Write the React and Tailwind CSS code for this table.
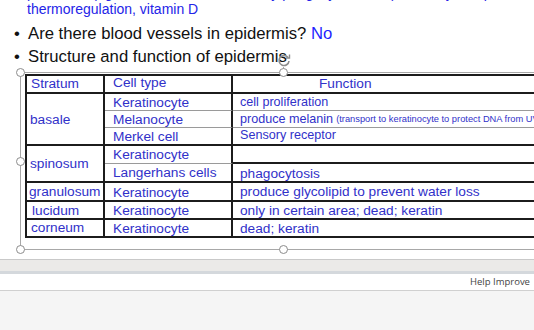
import React from 'react';

const dark = 'border-[#1c1c1c]';

const Cell = ({ className = '', children }) => (
  <div className={`flex overflow-visible whitespace-nowrap border-r-2 border-b-2 ${dark} ${className}`}>
    {children}
  </div>
);

const Handle = ({ className }) => (
  <div className={`absolute w-[9px] h-[9px] rounded-full bg-white border border-[#8c8c8c] ${className}`} />
);

const App = () => {
  return (
    <div className="w-[534px] h-[330px] overflow-hidden bg-[#f5f5f5] font-['Liberation_Sans',Arial,sans-serif]">
      {/* slide */}
      <div className="h-[259px] bg-white overflow-hidden">
        <div className="-mt-[14px] pl-[27px] text-[14px] text-[#2424e8] whitespace-nowrap">
          <div className="leading-[15px]">protection (against abrasion, infection by phagocytosis, UV), sensory reception,</div>
          <div className="leading-[16px]">thermoregulation, vitamin D</div>
        </div>

        <div className="mt-[5px] text-[16.7px] leading-[23px] text-[#111] whitespace-nowrap">
          <div className="flex">
            <span className="w-[28px] pl-[14px]">•</span>
            <span>
              Are there blood vessels in epidermis? <span className="text-[#1f1fff]">No</span>
            </span>
          </div>
          <div className="flex">
            <span className="w-[28px] pl-[14px]">•</span>
            <span>Structure and function of epidermis</span>
          </div>
        </div>

        {/* selected table frame */}
        <div className="relative mt-[4px] ml-[20px] w-[600px] h-[178px] border-t border-b border-l border-[#a8a8a8]">
          <svg className="absolute left-[256px] -top-[20px]" width="14" height="14" viewBox="0 0 14 14">
            <path d="M11 4.5A5 5 0 1 0 12 8" fill="none" stroke="#8c8c8c" strokeWidth="1.6" />
            <path d="M12.5 1.5V5H9" fill="none" stroke="#8c8c8c" strokeWidth="1.4" />
          </svg>
          <div className="absolute left-[262px] -top-[6px] w-px h-[6px] bg-[#a8a8a8]" />
          <Handle className="-left-[5px] -top-[5px]" />
          <Handle className="left-[258px] -top-[5px]" />
          <Handle className="-left-[5px] top-[84px]" />
          <Handle className="-left-[5px] -bottom-[5px]" />
          <Handle className="left-[258px] -bottom-[5px]" />

          <div
            className={`mt-[1px] ml-[4px] w-[560px] grid grid-cols-[78px_128px_354px] grid-rows-[18px_17px_17px_18px_18px_19px_19px_18px_18px] border-l-2 border-t-2 ${dark} text-[13.7px] leading-[15px] text-[#3131c9]`}
          >
            {/* header */}
            <Cell className="items-end pl-[4px] pb-[1px]">Stratum</Cell>
            <Cell className="items-end pl-[8px] pb-[2px]">Cell type</Cell>
            <Cell className="items-end pl-[86px] pb-[1px]">Function</Cell>

            {/* basale */}
            <Cell className="row-span-3 items-center pl-[3px]">basale</Cell>
            <div className="flex items-center pl-[8px] border-r-2 border-b border-b-[#9a9a9a] border-r-[#1c1c1c]">Keratinocyte</div>
            <div className="flex items-center pl-[7px] text-[12.6px] border-r-2 border-b border-b-[#9a9a9a] border-r-[#1c1c1c] whitespace-nowrap">cell proliferation</div>
            <div className="flex items-center pl-[8px] border-r-2 border-b border-b-[#9a9a9a] border-r-[#1c1c1c]">Melanocyte</div>
            <div className="flex items-center pl-[7px] text-[12.6px] border-r-2 border-b border-b-[#9a9a9a] border-r-[#1c1c1c] whitespace-nowrap">
              produce melanin
              <span className="ml-[3px] text-[9.3px]">(transport to keratinocyte to protect DNA from UV)</span>
            </div>
            <Cell className="items-center pl-[8px]">Merkel cell</Cell>
            <Cell className="items-start pl-[7px] text-[12.6px]">Sensory receptor</Cell>

            {/* spinosum */}
            <Cell className="row-span-2 items-center pl-[3px]">spinosum</Cell>
            <div className="flex items-center pl-[8px] border-r-2 border-b border-b-[#9a9a9a] border-r-[#1c1c1c]">Keratinocyte</div>
            <Cell />
            <Cell className="items-center pl-[8px]">Langerhans cells</Cell>
            <Cell className="items-end pl-[7px]">phagocytosis</Cell>

            {/* granulosum */}
            <Cell className="items-center pl-[2px]">granulosum</Cell>
            <Cell className="items-end pl-[8px]">Keratinocyte</Cell>
            <Cell className="items-center pl-[7px]">produce glycolipid to prevent water loss</Cell>

            {/* lucidum */}
            <Cell className="items-center pl-[5px]">lucidum</Cell>
            <Cell className="items-center pl-[8px]">Keratinocyte</Cell>
            <Cell className="items-center pl-[7px]">only in certain area; dead; keratin</Cell>

            {/* corneum */}
            <Cell className="items-start pl-[4px]">corneum</Cell>
            <Cell className="items-end pl-[8px]">Keratinocyte</Cell>
            <Cell className="items-end pl-[7px]">dead; keratin</Cell>
          </div>
        </div>
      </div>

      {/* window chrome below slide */}
      <div className="h-[12px] border-t border-[#c9c9c9] bg-[#ebeae8]" />
      <div className="h-[3px] bg-[#d4d8dc]" />
      <div className="h-[16px] bg-white flex items-center pl-[470px] whitespace-nowrap text-[9.5px] text-[#444] font-['Open_Sans',sans-serif]">
        Help Improve
      </div>
      <div className="border-t border-[#d0d0d0]" />
    </div>
  );
};

export default App;
